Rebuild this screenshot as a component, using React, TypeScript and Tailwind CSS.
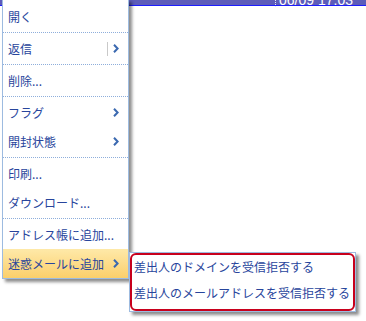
import React from "react";

const font = { fontFamily: '"Noto Sans CJK JP", "Noto Sans", sans-serif' };

type Item = { label: string; sub?: boolean; split?: boolean; active?: boolean };

const groups: Item[][] = [
  [{ label: "開く" }],
  [{ label: "返信", sub: true, split: true }],
  [{ label: "削除..." }],
  [
    { label: "フラグ", sub: true },
    { label: "開封状態", sub: true },
  ],
  [{ label: "印刷..." }, { label: "ダウンロード..." }],
  [{ label: "アドレス帳に追加..." }, { label: "迷惑メールに追加", sub: true, active: true }],
];

function Chevron() {
  return (
    <svg width="6" height="9" viewBox="0 0 6 9" className="shrink-0">
      <path d="M1 0.8 L4.6 4.5 L1 8.2" fill="none" stroke="#3b69b0" strokeWidth="2" />
    </svg>
  );
}

function MenuRow({ item }: { item: Item }) {
  return (
    <div
      className={`flex h-[29px] items-center pl-[5px] pr-[9px] text-[12px] text-[#28459c] ${
        item.active ? "bg-gradient-to-b from-[#fee9a8] to-[#fbcf6a]" : ""
      }`}
    >
      <span className="flex-1 whitespace-nowrap">{item.label}</span>
      {item.split && <span className="mr-[5px] h-[14px] w-px bg-[#c9c9c9]" />}
      {item.sub && <Chevron />}
    </div>
  );
}

export default function App() {
  return (
    <div className="relative h-[321px] w-[366px] overflow-hidden bg-white" style={font}>
      {/* header strip behind the menu */}
      <div className="flex h-[6px] items-end justify-end border-b border-[#1c1cff] bg-[#5d5cb9] pr-[13px]">
        <span className="mr-[3px] h-[7px] self-start border-l border-dotted border-[#e8e8f8]" />
        <span
          className="mb-[-2px] text-[14px] leading-[14px] text-white"
          style={{ fontFamily: '"Liberation Sans", Arial, sans-serif' }}
        >
          06/09 17:03
        </span>
      </div>

      {/* context menu */}
      <div className="absolute left-[2px] top-[-1px] w-[127px] border border-[#9dbbe0] bg-white pt-[2px] shadow-[3px_3px_3px_rgba(0,0,0,0.45)]">
        {groups.map((g, gi) => (
          <div key={gi}>
            {gi > 0 && <div className="my-[1px] border-t border-dotted border-[#8eaedb]" />}
            {g.map((it) => (
              <MenuRow key={it.label} item={it} />
            ))}
          </div>
        ))}
      </div>

      {/* submenu */}
      <div className="absolute left-[129px] top-[252px] w-[227px] border border-[#9dbbe0] bg-white shadow-[3px_3px_3px_rgba(0,0,0,0.45)]">
        <div className="rounded-[6px] border-2 border-[#c8001c] pl-[2px] text-[12px] text-[#28459c]">
          <div className="flex h-[26px] items-center pb-[2px] whitespace-nowrap">差出人のドメインを受信拒否する</div>
          <div className="flex h-[28px] items-center pb-[5px] whitespace-nowrap">差出人のメールアドレスを受信拒否する</div>
        </div>
      </div>
    </div>
  );
}
